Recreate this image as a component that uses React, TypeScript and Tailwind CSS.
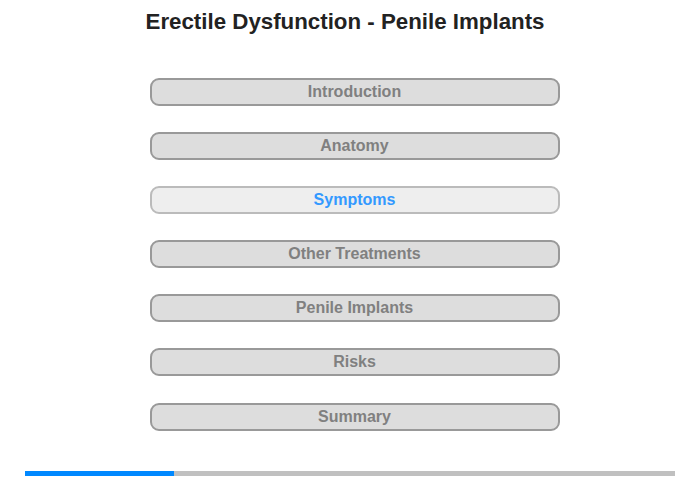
import React from "react"

const SECTIONS = [
  "Introduction",
  "Anatomy",
  "Symptoms",
  "Other Treatments",
  "Penile Implants",
  "Risks",
  "Summary",
]

const ACTIVE = "Symptoms"

export default function App() {
  return (
    <div className="relative h-[480px] w-[700px] bg-white font-['Liberation_Sans',Arial,sans-serif]">
      <h1 className="pt-[8px] pr-[10px] text-center text-[22.3px] font-bold leading-[28px] text-[#222]">
        Erectile Dysfunction - Penile Implants
      </h1>
      <div className="mt-[42px] flex flex-col items-center gap-[26.1px] pl-[9px]">
        {SECTIONS.map(s => {
          const active = s === ACTIVE
          return (
            <button
              key={s}
              type="button"
              className={[
                "flex h-[28px] w-[410px] items-center justify-center rounded-[9px] border-2 text-[16px] font-bold leading-none",
                active
                  ? "border-[#bbbbbb] bg-[#eeeeee] text-[#3399ff]"
                  : "border-[#999999] bg-[#dddddd] text-[#808080]",
              ].join(" ")}
            >
              {s}
            </button>
          )
        })}
      </div>
      <div className="absolute left-[25px] top-[471px] flex h-[5px] w-[650px] bg-[#c0c0c0]">
        <div className="h-full w-[149px] bg-[#0088ff]" />
      </div>
    </div>
  )
}
